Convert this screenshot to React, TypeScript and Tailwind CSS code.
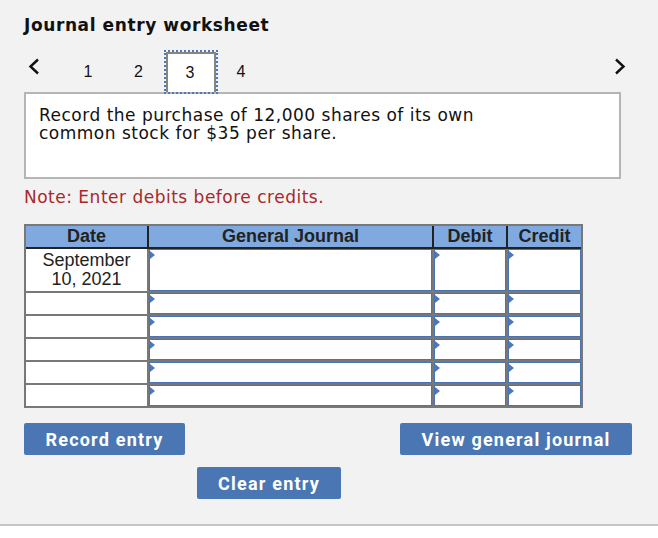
import React from 'react';

const verdana = { fontFamily: '"DejaVu Sans", Verdana, sans-serif' };

function Chevron({ dir }: { dir: 'left' | 'right' }) {
  return (
    <svg width="12" height="17" viewBox="0 0 12 17" fill="none">
      <polyline
        points={dir === 'left' ? '10,1.5 2.5,8.5 10,15.5' : '2,1.5 9.5,8.5 2,15.5'}
        stroke="#111"
        strokeWidth="2.4"
      />
    </svg>
  );
}

function InputCell({ tall }: { tall?: boolean }) {
  return (
    <div className={`relative bg-white border border-[#4a73b3] ${tall ? 'h-[42px]' : 'h-[21px]'}`}>
      <span className="absolute left-0 top-[1px] w-0 h-0 border-y-[4px] border-y-transparent border-l-[5px] border-l-[#4a78bf]" />
    </div>
  );
}

const rows = [true, false, false, false, false, false];

export default function App() {
  return (
    <div className="w-[658px] h-[538px] bg-white">
      <div className="h-[526px] bg-[#f2f2f2] border-b-2 border-[#c6c6c6] pl-[24px] pt-[15px]">
        <h1 className="text-[17px] leading-[20px] font-bold tracking-[0.6px] text-[#111]" style={verdana}>
          Journal entry worksheet
        </h1>

        {/* step tabs */}
        <div className="relative z-10 mt-[15px] flex h-[44px] w-[600px] items-start -mb-[2px]" style={{ fontFamily: '"Liberation Sans", Arial, sans-serif' }}>
          <div className="ml-[4px] mt-[8px]">
            <Chevron dir="left" />
          </div>
          <div className="ml-[23px] flex h-full items-center text-[16px] text-[#111]">
            <div className="w-[50px] text-center">1</div>
            <div className="w-[51px] text-center">2</div>
            <div className="h-[44px] w-[54px] border-2 border-dotted border-[#4a78b8]">
              <div className="flex h-full items-center justify-center border-x-2 border-t-2 border-[#858585] bg-white pr-[2px]">
                3
              </div>
            </div>
            <div className="w-[46px] text-center">4</div>
          </div>
          <div className="ml-auto mt-[8px] mr-[-2px]">
            <Chevron dir="right" />
          </div>
        </div>

        <div className="h-[87px] w-[597px] border-2 border-[#b5b5b5] bg-white pl-[13px] pt-[12px] text-[17px] leading-[18px] tracking-[0.5px] text-[#111]" style={verdana}>
          Record the purchase of 12,000 shares of its own
          <br />
          common stock for $35 per share.
        </div>

        <p className="mt-[8px] text-[17px] leading-[20px] tracking-[0.5px] text-[#a8282a]" style={verdana}>
          Note: Enter debits before credits.
        </p>

        {/* journal table */}
        <div className="mt-[17px] w-[559px] border-2 border-[#787878] bg-[#787878]" style={{ fontFamily: '"Liberation Sans", Arial, sans-serif' }}>
          <div className="grid grid-cols-[121px_283px_72px_73px] gap-x-[2px] border-b-2 border-[#222] bg-[#222] text-[18px] font-bold leading-[21px] text-[#222]">
            <div className="bg-[#80aadf] text-center">Date</div>
            <div className="bg-[#80aadf] text-center">General Journal</div>
            <div className="bg-[#80aadf] text-center">Debit</div>
            <div className="bg-[#80aadf] text-center">Credit</div>
          </div>
          <div className="grid grid-cols-[121px_283px_72px_73px] gap-[2px]">
            {rows.map((tall, i) => (
              <React.Fragment key={i}>
                <div className={`bg-white text-center text-[18px] leading-[19px] text-[#222] ${tall ? 'h-[42px] pt-[2px]' : 'h-[21px]'}`}>
                  {i === 0 && (
                    <>
                      September
                      <br />
                      10, 2021
                    </>
                  )}
                </div>
                <InputCell tall={tall} />
                <InputCell tall={tall} />
                <InputCell tall={tall} />
              </React.Fragment>
            ))}
          </div>
        </div>

        {/* actions */}
        <div className="mt-[15px] flex w-[608px] justify-between" style={{ fontFamily: 'Roboto, "Liberation Sans", sans-serif' }}>
          <button className="h-[32px] w-[161px] rounded-[2px] bg-[#4a77b4] text-[18px] font-bold tracking-[1.2px] text-white">
            Record entry
          </button>
          <button className="h-[32px] w-[232px] rounded-[2px] bg-[#4a77b4] text-[18px] font-bold tracking-[1.2px] text-white">
            View general journal
          </button>
        </div>
        <div className="mt-[12px] pl-[173px]" style={{ fontFamily: 'Roboto, "Liberation Sans", sans-serif' }}>
          <button className="h-[32px] w-[144px] rounded-[2px] bg-[#4a77b4] text-[18px] font-bold tracking-[1.2px] text-white">
            Clear entry
          </button>
        </div>
      </div>
    </div>
  );
}
